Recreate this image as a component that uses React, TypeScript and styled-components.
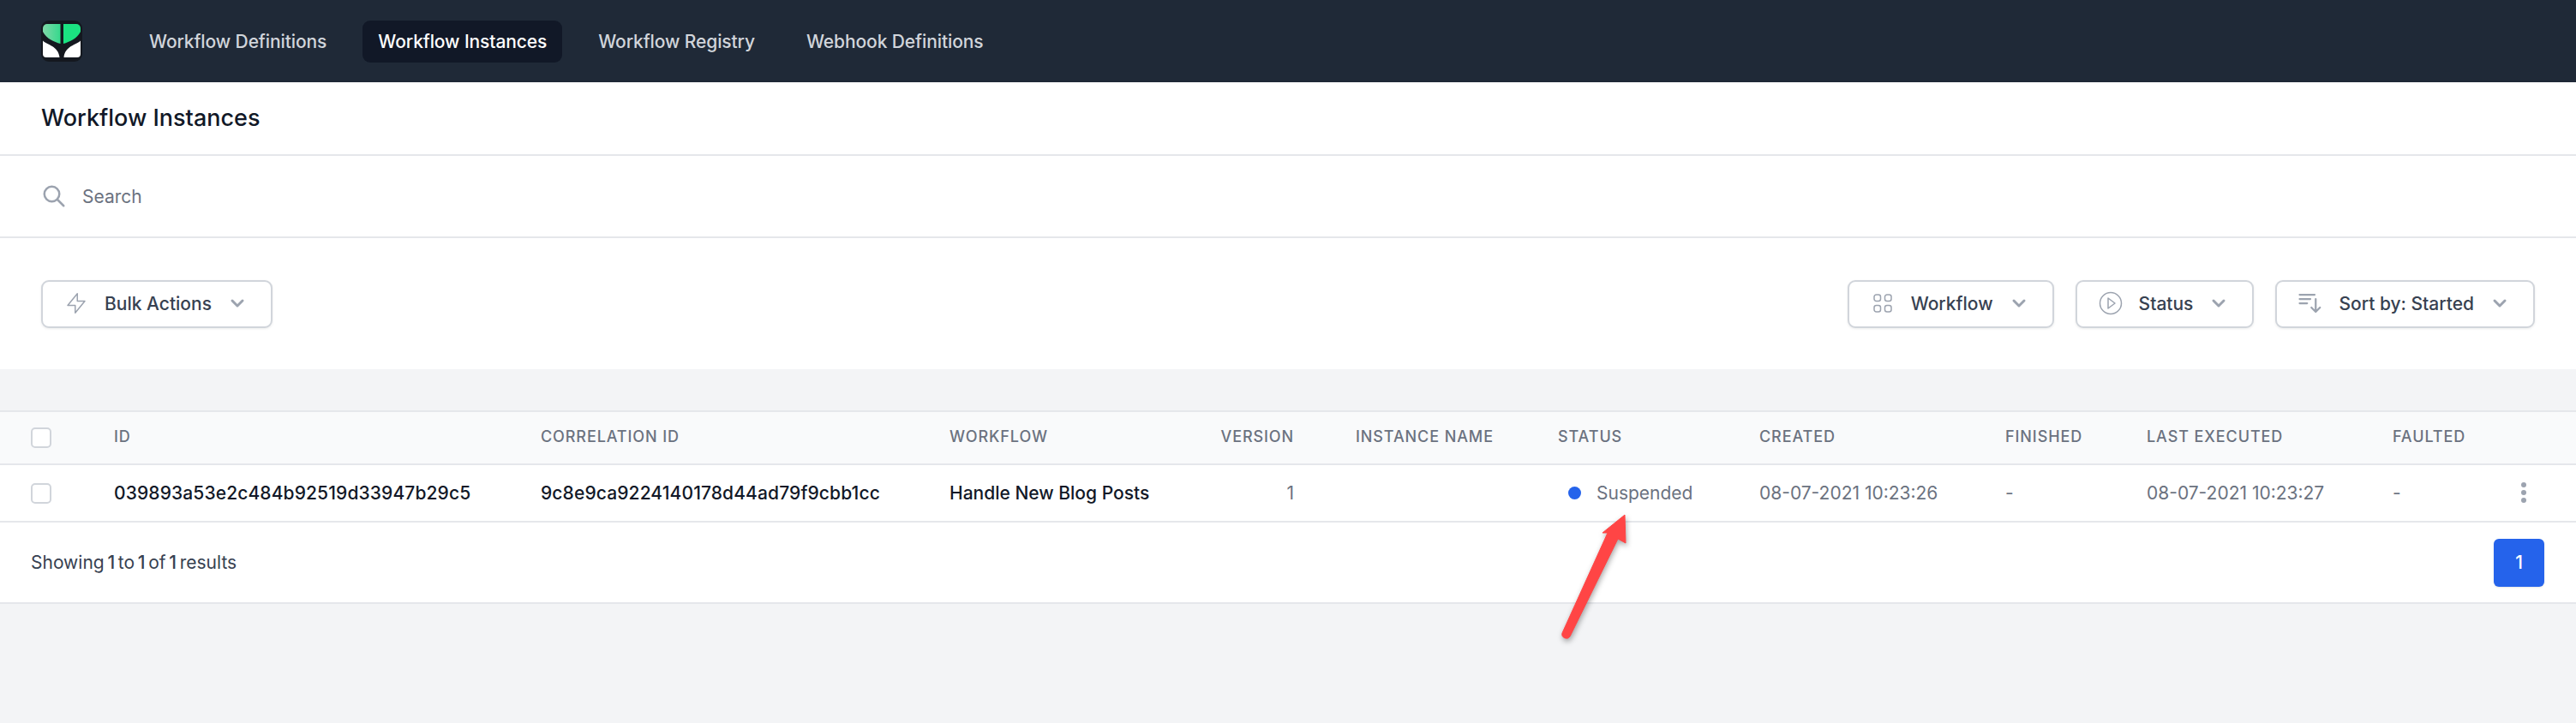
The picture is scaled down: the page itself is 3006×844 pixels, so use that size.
import React from 'react'
import styled, { createGlobalStyle } from 'styled-components'

const GlobalStyle = createGlobalStyle`
  html, body {
    margin: 0;
    padding: 0;
    background: #f3f4f6;
    font-family: Inter, "Noto Sans", sans-serif;
    color: #111827;
  }
  * { box-sizing: border-box; }
`

const Page = styled.div`
  position: relative;
  width: 3006px;
  height: 844px;
  overflow: hidden;
`

const TopBar = styled.nav`
  display: flex;
  align-items: center;
  height: 96px;
  padding-left: 48px;
  background: #1f2937;
`

const Logo = styled.svg`
  width: 48px;
  height: 48px;
  margin-right: 60px;
`

const NavLinks = styled.div`
  display: flex;
  gap: 24px;
`

const NavLink = styled.a<{ $active?: boolean }>`
  display: block;
  height: 49px;
  padding: 0 18px;
  border-radius: 9px;
  font-size: 21px;
  line-height: 49px;
  font-weight: 500;
  letter-spacing: -0.1px;
  color: ${p => (p.$active ? '#ffffff' : '#d1d5db')};
  background: ${p => (p.$active ? '#111827' : 'transparent')};
`

const TitleBar = styled.header`
  display: flex;
  align-items: center;
  height: 86px;
  padding: 0 48px 2px;
  background: #fff;
  border-bottom: 2px solid #e5e7eb;
`

const Title = styled.h1`
  margin: 0;
  font-size: 27px;
  font-weight: 500;
  color: #111827;
`

const SearchBar = styled.div`
  display: flex;
  align-items: center;
  gap: 18px;
  height: 96px;
  padding: 0 48px;
  background: #fff;
  border-bottom: 2px solid #e5e7eb;
`

const SearchIcon = styled.svg`
  width: 30px;
  height: 30px;
  color: #9ca3af;
`

const SearchText = styled.span`
  font-size: 21px;
  color: #6b7280;
`

const Actions = styled.div`
  display: flex;
  justify-content: space-between;
  align-items: center;
  height: 153px;
  padding: 0 48px;
  background: #fff;
`

const ActionGroup = styled.div`
  display: flex;
  gap: 25px;
`

const ActionButton = styled.button`
  display: flex;
  align-items: center;
  height: 56px;
  padding: 0 24px 1px;
  background: #fff;
  border: 2px solid #d1d5db;
  border-radius: 9px;
  box-shadow: 0 1px 3px rgba(0, 0, 0, 0.08);
  font-family: inherit;
  font-size: 21px;
  font-weight: 500;
  color: #374151;
`

const ButtonIcon = styled.svg`
  flex: none;
  width: 30px;
  height: 30px;
  margin-right: 18px;
  color: #9ca3af;
`

const Chevron = styled.svg`
  flex: none;
  width: 30px;
  height: 30px;
  margin-left: 15px;
  color: #9ca3af;
`

const Gap = styled.div`
  height: 48px;
`

const TableRow = styled.div<{ $head?: boolean }>`
  display: grid;
  grid-template-columns: 133px 498px 477px 310px 92px 308px 235px 287px 165px 287px 138px 1fr;
  align-items: center;
  height: ${p => (p.$head ? 64 : 67)}px;
  background: ${p => (p.$head ? '#f9fafb' : '#fff')};
  border-top: ${p => (p.$head ? '2px solid #e5e7eb' : 'none')};
  border-bottom: 2px solid #e5e7eb;
`

const Checkbox = styled.span`
  display: block;
  width: 24px;
  height: 24px;
  margin-left: 36px;
  background: #fff;
  border: 2px solid #d1d5db;
  border-radius: 5px;
`

const HeadCell = styled.div<{ $right?: boolean; $indent?: boolean }>`
  padding: 0 0 3px ${p => (p.$indent ? 72 : 0)}px;
  font-size: 18px;
  font-weight: 500;
  letter-spacing: 0.9px;
  text-transform: uppercase;
  white-space: nowrap;
  color: #6b7280;
  text-align: ${p => (p.$right ? 'right' : 'left')};
`

const Cell = styled.div<{ $dark?: boolean; $right?: boolean }>`
  display: flex;
  align-items: center;
  justify-content: ${p => (p.$right ? 'flex-end' : 'flex-start')};
  padding-bottom: 1px;
  font-size: 21px;
  font-weight: ${p => (p.$dark ? 500 : 400)};
  white-space: nowrap;
  color: ${p => (p.$dark ? '#111827' : '#6b7280')};
`

const IdCell = styled(Cell)`
  letter-spacing: 0.12px;
`

const StatusDot = styled.span`
  width: 15px;
  height: 15px;
  margin: 0 18px 0 12px;
  border-radius: 50%;
  background: #2563eb;
`

const Dots = styled.svg`
  width: 30px;
  height: 30px;
  color: #9ca3af;
`

const Footer = styled.footer`
  display: flex;
  justify-content: space-between;
  align-items: center;
  height: 95px;
  padding: 0 37px 0 36px;
  background: #fff;
  border-bottom: 2px solid #e5e7eb;
`

const Showing = styled.p`
  margin: 0;
  font-size: 21px;
  word-spacing: -2.2px;
  color: #374151;

  b {
    font-weight: 500;
  }
`

const PageButton = styled.button`
  width: 59px;
  height: 56px;
  border: none;
  border-radius: 6px;
  background: #2563eb;
  box-shadow: 0 1px 2px rgba(0, 0, 0, 0.1);
  font-family: inherit;
  font-size: 21px;
  font-weight: 500;
  color: #fff;
`

const Arrow = styled.svg`
  position: absolute;
  left: 1800px;
  top: 590px;
  width: 120px;
  height: 180px;
  filter: drop-shadow(1px 3px 3px rgba(0, 0, 0, 0.35));
`

const stroke = { fill: 'none', stroke: 'currentColor', strokeLinecap: 'round', strokeLinejoin: 'round' } as const

const ChevronIcon = () => (
  <Chevron viewBox="0 0 20 20" fill="currentColor">
    <path fillRule="evenodd" clipRule="evenodd" d="M5.293 7.293a1 1 0 011.414 0L10 10.586l3.293-3.293a1 1 0 111.414 1.414l-4 4a1 1 0 01-1.414 0l-4-4a1 1 0 010-1.414z" />
  </Chevron>
)

const columns = ['ID', 'Correlation ID', 'Workflow', 'Version', 'Instance Name', 'Status', 'Created', 'Finished', 'Last Executed', 'Faulted']

export default function App (): JSX.Element {
  return (
    <Page>
      <GlobalStyle />
      <TopBar>
        <Logo viewBox="0 0 48 48">
          <defs>
            <linearGradient id="leaf" x1="0" y1="0" x2="1" y2="0">
              <stop offset="0" stopColor="#7fd8a8" />
              <stop offset="1" stopColor="#35d98c" />
            </linearGradient>
          </defs>
          <rect width="48" height="48" rx="9" fill="#14181f" />
          <path d="M7 4h15.500v23C15 25 6 21 2 13V9a5 5 0 015-5z" fill="url(#leaf)" />
          <path d="M26 4h15a5 5 0 015 5v4c-4 8-13 12-20 14z" fill="#1be281" />
          <path d="M2 23.500c5 5 18 6 19.500 19.500H6a4 4 0 01-4-4z" fill="#fff" />
          <path d="M46 23.500c-5 5-18 6-19.500 19.500H42a4 4 0 004-4z" fill="#fff" />
        </Logo>
        <NavLinks>
          <NavLink>Workflow Definitions</NavLink>
          <NavLink $active>Workflow Instances</NavLink>
          <NavLink>Workflow Registry</NavLink>
          <NavLink>Webhook Definitions</NavLink>
        </NavLinks>
      </TopBar>
      <TitleBar><Title>Workflow Instances</Title></TitleBar>
      <SearchBar>
        <SearchIcon viewBox="0 0 24 24" {...stroke} strokeWidth={2}><path d="M21 21l-6-6m2-5a7 7 0 11-14 0 7 7 0 0114 0z" /></SearchIcon>
        <SearchText>Search</SearchText>
      </SearchBar>
      <Actions>
        <ActionButton>
          <ButtonIcon viewBox="0 0 24 24" {...stroke} strokeWidth={1.2}><path d="M13 10V3L4 14h7v7l9-11h-7z" /></ButtonIcon>
          Bulk Actions
          <ChevronIcon />
        </ActionButton>
        <ActionGroup>
          <ActionButton>
            <ButtonIcon viewBox="0 0 24 24" {...stroke} strokeWidth={1.2}><path d="M4 6a2 2 0 012-2h2a2 2 0 012 2v2a2 2 0 01-2 2H6a2 2 0 01-2-2V6zM14 6a2 2 0 012-2h2a2 2 0 012 2v2a2 2 0 01-2 2h-2a2 2 0 01-2-2V6zM4 16a2 2 0 012-2h2a2 2 0 012 2v2a2 2 0 01-2 2H6a2 2 0 01-2-2v-2zM14 16a2 2 0 012-2h2a2 2 0 012 2v2a2 2 0 01-2 2h-2a2 2 0 01-2-2v-2z" /></ButtonIcon>
            Workflow
            <ChevronIcon />
          </ActionButton>
          <ActionButton>
            <ButtonIcon viewBox="0 0 24 24" {...stroke} strokeWidth={1.2}><circle cx="12" cy="12" r="10" /><path d="M9.600 7.200L16 12l-6.400 4.800z" /></ButtonIcon>
            Status
            <ChevronIcon />
          </ActionButton>
          <ActionButton>
            <ButtonIcon viewBox="0 0 24 24" {...stroke} strokeWidth={1.8}><path d="M2 4h14M2 8h10M2 12h7m8-4v12m0 0l-4-4m4 4l4-4" /></ButtonIcon>
            Sort by: Started
            <ChevronIcon />
          </ActionButton>
        </ActionGroup>
      </Actions>
      <Gap />
      <TableRow $head>
        <Checkbox />
        {columns.map(c => <HeadCell key={c} $right={c === 'Version'} $indent={c === 'Instance Name'}>{c}</HeadCell>)}
      </TableRow>
      <TableRow>
        <Checkbox />
        <IdCell $dark>039893a53e2c484b92519d33947b29c5</IdCell>
        <IdCell $dark>9c8e9ca9224140178d44ad79f9cbb1cc</IdCell>
        <Cell $dark>Handle New Blog Posts</Cell>
        <Cell $right>1</Cell>
        <Cell />
        <Cell><StatusDot />Suspended</Cell>
        <Cell>08-07-2021 10:23:26</Cell>
        <Cell>-</Cell>
        <Cell>08-07-2021 10:23:27</Cell>
        <Cell>-</Cell>
        <Cell>
          <Dots viewBox="0 0 20 20" fill="currentColor">
            <circle cx="10" cy="4" r="2" /><circle cx="10" cy="10" r="2" /><circle cx="10" cy="16" r="2" />
          </Dots>
        </Cell>
      </TableRow>
      <Footer>
        <Showing>Showing <b>1</b> to <b>1</b> of <b>1</b> results</Showing>
        <PageButton>1</PageButton>
      </Footer>
      <Arrow viewBox="0 0 120 180">
        <path d="M96 11L97 44 88 39 32 153a5 5 0 01-9-4L76 32 70 32z" fill="#ff4545" stroke="#ff4545" strokeWidth="1" strokeLinejoin="round" />
      </Arrow>
    </Page>
  )
}
